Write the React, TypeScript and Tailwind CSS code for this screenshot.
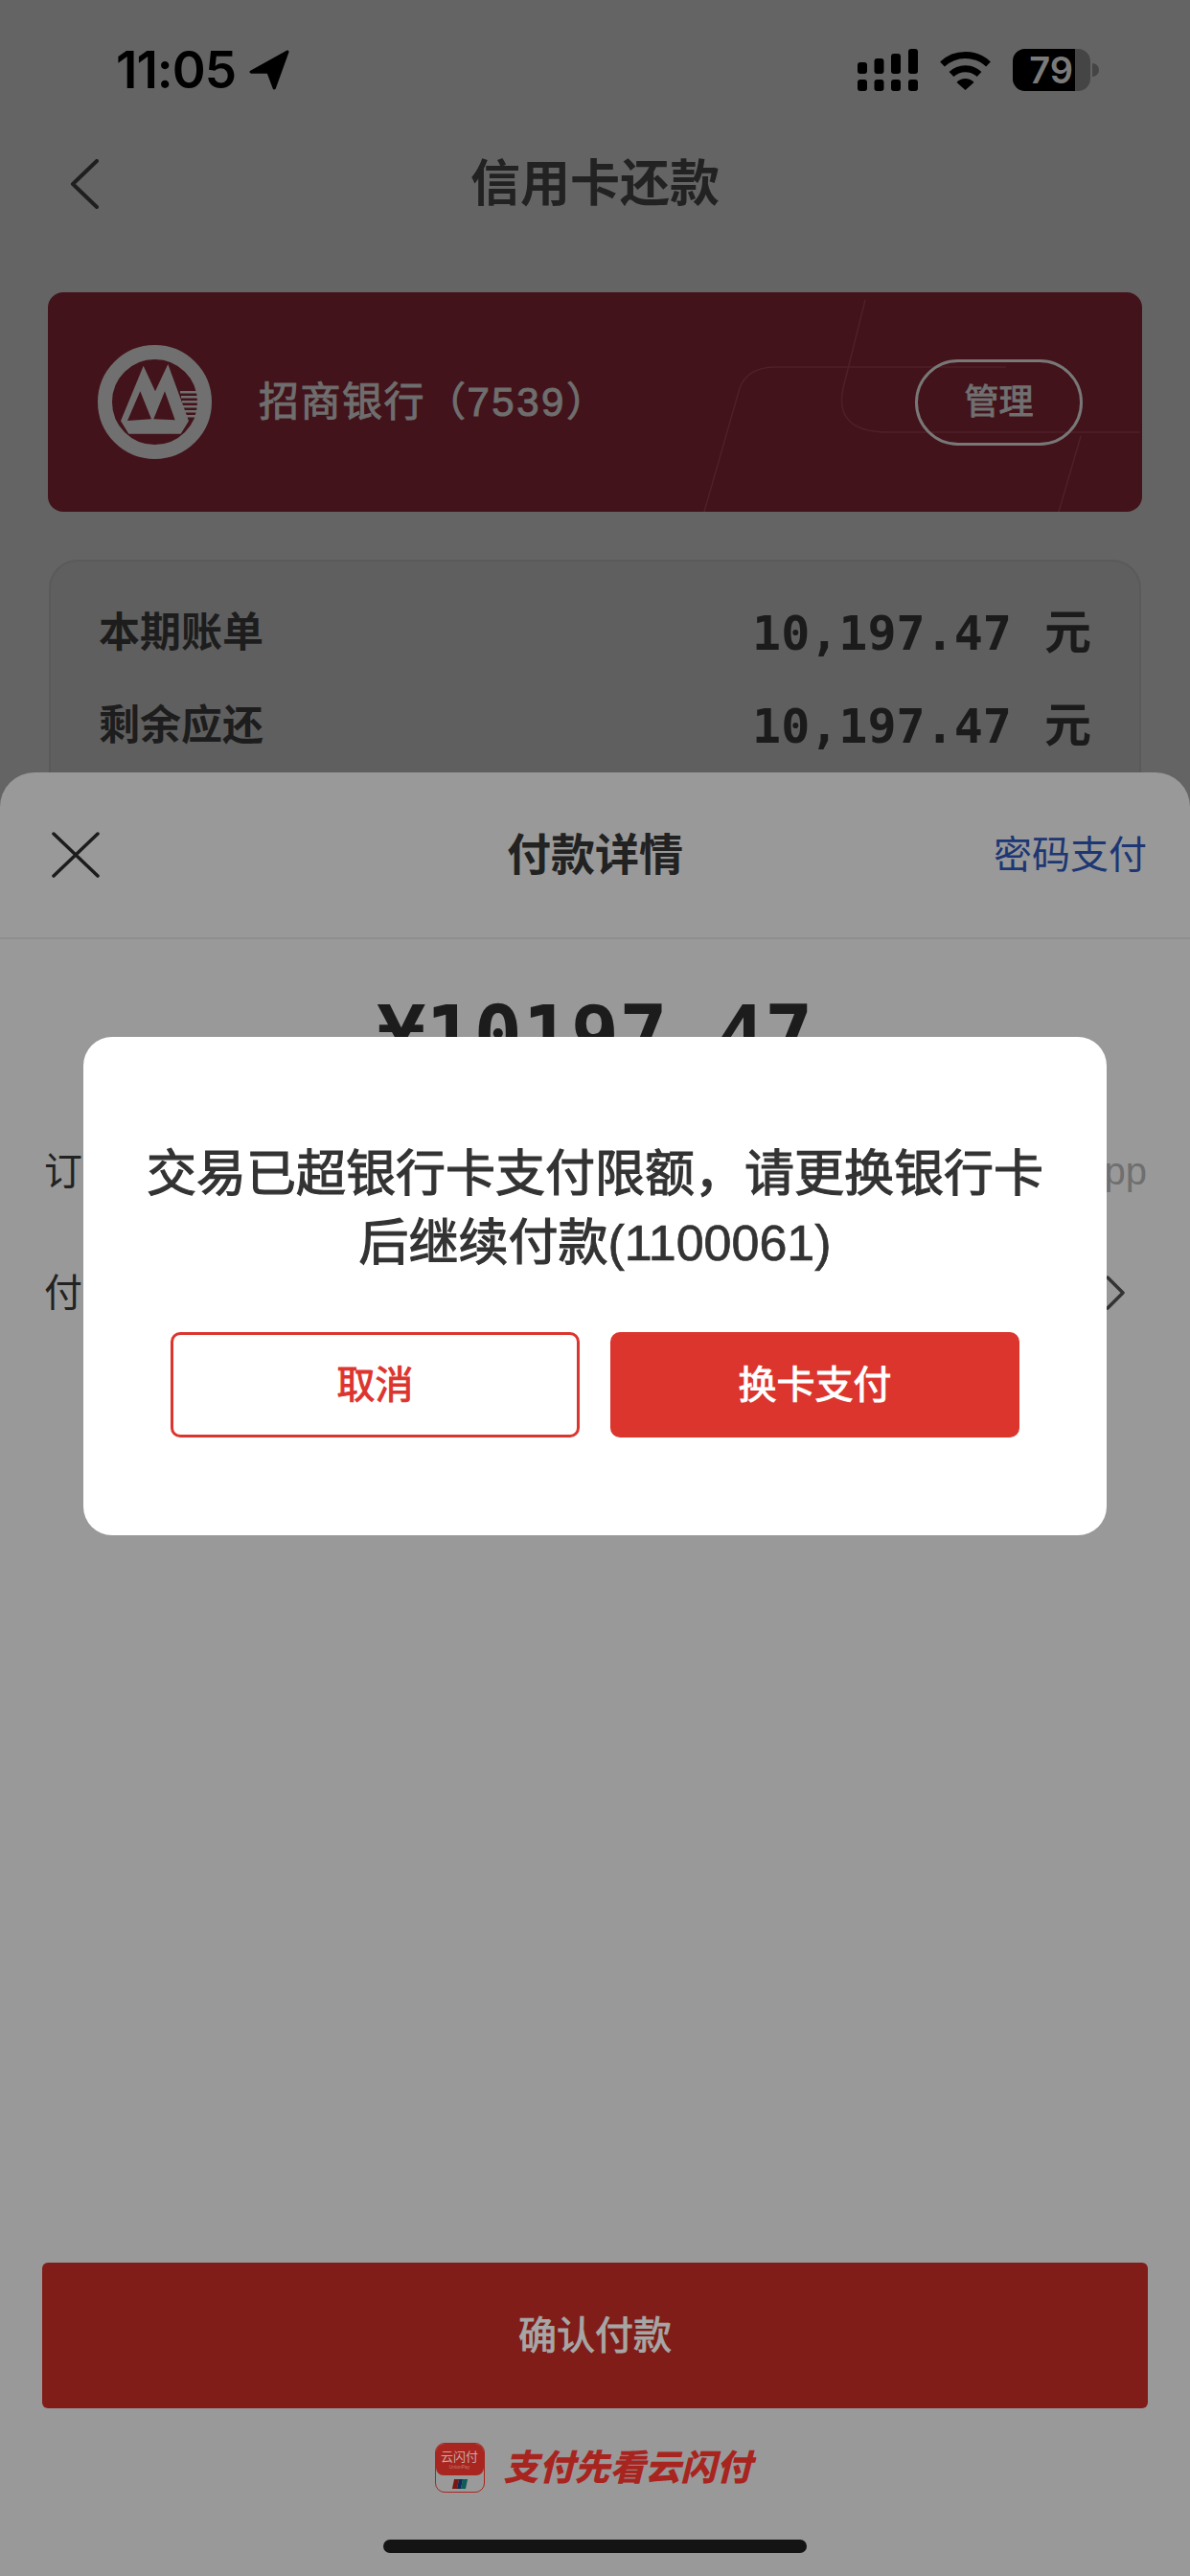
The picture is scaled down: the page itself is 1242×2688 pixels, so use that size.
import React from 'react';

function SignalIcon() {
    return (
        <svg width="63" height="44" viewBox="0 0 63 44" fill="#000">
            <rect x="0" y="14" width="10" height="12" rx="3" />
            <rect x="17.5" y="10" width="10" height="16" rx="3" />
            <rect x="35" y="5" width="10" height="21" rx="3" />
            <rect x="53" y="0" width="10" height="26" rx="3" />
            <rect x="0" y="32" width="10" height="12" rx="3" />
            <rect x="17.5" y="32" width="10" height="12" rx="3" />
            <rect x="35" y="32" width="10" height="12" rx="3" />
            <rect x="53" y="32" width="10" height="12" rx="3" />
        </svg>
    );
}

function WifiIcon() {
    return (
        <svg width="55" height="41" viewBox="0 0 55 41" fill="none" stroke="#000" strokeWidth="7">
            <path d="M3.5 14 A 35 35 0 0 1 51.5 14" />
            <path d="M13 24.5 A 21 21 0 0 1 42 24.5" />
            <path d="M18.5 33 A 12 12 0 0 1 36.5 33 L27.5 41 Z" fill="#000" stroke="none" />
        </svg>
    );
}

function BankLogo() {
    return (
        <svg width="119" height="119" viewBox="0 0 119 119" className="shrink-0">
            <circle cx="59.5" cy="59.5" r="52" fill="none" stroke="#707070" strokeWidth="15" />
            <path
                fillRule="evenodd"
                fill="#707070"
                d="M24 79.3 L47.7 21.7 L60 48.3 L73.3 20 L95 79.3 L86.7 92.7 L32.3 92.7 Z M31 79 L56 77.3 L44.3 48.3 Z M58.3 77.3 L80.7 78.3 L70 48.3 Z"
            />
            <g fill="#707070">
                <rect x="86" y="48" width="19" height="2.5" />
                <rect x="87" y="53" width="18" height="2.5" />
                <rect x="88" y="58" width="17" height="2.5" />
                <rect x="89" y="63" width="16" height="2.5" />
                <rect x="90" y="68" width="15" height="2.5" />
                <rect x="91" y="73" width="13" height="2.5" />
            </g>
        </svg>
    );
}

function AmountRow({ label, amount }: { label: string; amount: string }) {
    return (
        <div className="flex h-[97px] items-center justify-between">
            <span className="text-[43px] font-semibold leading-none text-[#1d1d1d]">{label}</span>
            <span className="flex items-center text-[#1b1b1b]">
                <span className="[font-family:'DejaVu_Sans_Mono',monospace] text-[50px] font-bold leading-none">{amount}</span>
                <span className="ml-[34px] text-[49px] font-semibold leading-none">元</span>
            </span>
        </div>
    );
}

export default function App() {
    return (
        <div className="relative flex h-[2688px] w-[1242px] flex-col overflow-hidden bg-[#646464] [font-family:'Liberation_Sans','Noto_Sans_CJK_SC',sans-serif]">
            <div className="h-[806px] shrink-0 overflow-hidden">
                {/* status bar */}
                <div className="flex h-[130px] items-start justify-between pl-[121px] pr-[95px] pt-[51px]">
                    <div className="flex items-center">
                        <span className="[font-family:Inter,sans-serif] text-[53px] font-semibold leading-[44px] tracking-[-1px] text-black">11:05</span>
                        <svg width="42" height="42" viewBox="0 0 40 40" className="ml-[14px]" fill="#000" stroke="#000" strokeWidth="3" strokeLinejoin="round">
                            <path d="M38 2 L2 22 L19 22 L25 38 Z" />
                        </svg>
                    </div>
                    <div className="flex items-center">
                        <SignalIcon />
                        <div className="ml-[22px]">
                            <WifiIcon />
                        </div>
                        <div className="relative ml-[22px] flex h-[44px] w-[81px] overflow-hidden rounded-[13px] bg-[#454545]">
                            <div className="flex w-[65px] items-center justify-end bg-black pr-[2px]">
                                <span className="[font-family:Inter,sans-serif] text-[38px] font-semibold leading-none text-[#7a7a7a]">79</span>
                            </div>
                        </div>
                        <div className="ml-[2px] h-[14px] w-[7px] rounded-r-full bg-[#454545]" />
                    </div>
                </div>

                {/* nav */}
                <div className="grid h-[124px] grid-cols-[1fr_auto_1fr] items-center px-[73px]">
                    <svg width="30" height="52" viewBox="0 0 30 52" fill="none" stroke="#1f1f1f" strokeWidth="4" strokeLinecap="round" strokeLinejoin="round">
                        <path d="M28 2 L3 26 L28 50" />
                    </svg>
                    <h1 className="text-[52px] font-semibold leading-none text-[#222]">信用卡还款</h1>
                    <div />
                </div>

                {/* bank card */}
                <div className="relative mx-[50px] mt-[51px] flex h-[229px] items-center overflow-hidden rounded-[16px] bg-[#42131a] pl-[52px] pr-[62px]">
                    <svg className="absolute inset-0" width="1140" height="229" viewBox="0 0 1140 229" fill="none" stroke="#4f2127" strokeWidth="1.5">
                        <path d="M853 8 L830 100 Q820 145 875 146 L1140 146" />
                        <path d="M685 229 L722 100 Q730 78 760 78 L1000 78" />
                        <path d="M1055 229 L1078 150" />
                    </svg>
                    <BankLogo />
                    <span className="relative ml-[49px] text-[42px] leading-none tracking-[1.5px] text-[#6e6e6e] [-webkit-text-stroke:1px_#6e6e6e]">
                        招商银行（<span className="tracking-[2.5px]">7539</span>）
                    </span>
                    <div className="relative ml-auto flex h-[90px] w-[175px] items-center justify-center rounded-full border-[3px] border-[#787878]">
                        <span className="text-[36px] leading-none text-[#707070] [-webkit-text-stroke:1px_#707070]">管理</span>
                    </div>
                </div>

                {/* bill summary */}
                <div className="mx-[51px] mt-[50px] h-[300px] rounded-[30px] border-[2px] border-[#5a5a5a] bg-[#5f5f5f] pl-[50px] pr-[50px] pt-[26px]">
                    <AmountRow label="本期账单" amount="10,197.47" />
                    <AmountRow label="剩余应还" amount="10,197.47" />
                </div>
            </div>

            {/* payment sheet */}
            <div className="flex flex-1 flex-col rounded-t-[36px] bg-[#999999]">
                <div className="grid h-[174px] shrink-0 grid-cols-[1fr_auto_1fr] items-center border-b-[2px] border-[#8e8e8e] px-[45px]">
                    <svg width="50" height="48" viewBox="0 0 50 48" fill="none" stroke="#1c1c1c" strokeWidth="3.5" strokeLinecap="round" className="ml-[9px]">
                        <path d="M2 2 L48 46 M48 2 L2 46" />
                    </svg>
                    <h2 className="text-[46px] font-semibold leading-none text-[#222]">付款详情</h2>
                    <span className="justify-self-end text-[40px] leading-none text-[#1d3674]">密码支付</span>
                </div>

                <div className="mt-[50px] text-center [font-family:'DejaVu_Sans_Mono',monospace] text-[84px] font-bold leading-[100px] text-[#1c1c1c]">
                    ¥10197.47
                </div>

                <div className="mt-[28px] flex h-[127px] items-center justify-between pl-[46px] pr-[45px]">
                    <span className="text-[40px] leading-none text-[#222]">订单信息</span>
                    <span className="text-[40px] leading-none text-[#6f6f6f]">信用卡还款app</span>
                </div>
                <div className="flex h-[127px] items-center justify-between pl-[46px] pr-[68px]">
                    <span className="text-[40px] leading-none text-[#222]">付款方式</span>
                    <svg width="20" height="36" viewBox="0 0 20 36" fill="none" stroke="#333" strokeWidth="3.5" strokeLinecap="round" strokeLinejoin="round">
                        <path d="M2 2 L18 18 L2 34" />
                    </svg>
                </div>

                <div className="mx-[44px] mt-auto flex h-[152px] shrink-0 items-center justify-center rounded-[6px] bg-[#811d18]">
                    <span className="text-[40px] leading-none text-[#a6a6a6] [-webkit-text-stroke:1px_#a6a6a6]">确认付款</span>
                </div>

                {/* unionpay slogan */}
                <div className="mt-[36px] flex h-[52px] shrink-0 items-center justify-center pr-[4px]">
                    <div className="flex h-[52px] w-[52px] flex-col overflow-hidden rounded-[10px] border border-[#a8261f] bg-[#9a9a9a]">
                        <div className="flex h-[33px] flex-col items-center justify-center rounded-b-[8px] bg-[#a8261f]">
                            <span className="text-[13px] leading-[14px] text-[#c9a9a5]">云闪付</span>
                            <span className="text-[5px] leading-[6px] text-[#c47a73]">UnionPay</span>
                        </div>
                        <div className="flex flex-1 items-center justify-center">
                            <div className="flex h-[10px] w-[14px] -skew-x-12">
                                <div className="flex-1 bg-[#7a1512]" />
                                <div className="flex-1 bg-[#102a55]" />
                                <div className="flex-1 bg-[#0d5c5a]" />
                            </div>
                        </div>
                    </div>
                    <span className="ml-[20px] text-[37px] font-black italic leading-none text-[#a8241f]">支付先看云闪付</span>
                </div>

                <div className="mx-[400px] mb-[24px] mt-[49px] h-[14px] shrink-0 rounded-full bg-[#141414]" />
            </div>

            {/* alert dialog */}
            <div className="absolute left-[87px] top-[1082px] flex h-[520px] w-[1068px] flex-col items-center rounded-[30px] bg-white pt-[107px]">
                <p className="text-center text-[52px] leading-[72px] text-[#333] [-webkit-text-stroke:1.2px_#333]">
                    交易已超银行卡支付限额，请更换银行卡
                    <br />
                    后继续付款<span className="[-webkit-text-stroke:0.7px_#333]">(1100061)</span>
                </p>
                <div className="mt-[57px] flex gap-[32px]">
                    <button className="flex h-[110px] w-[427px] items-center justify-center rounded-[10px] border-[3px] border-[#dc352e] text-[40px] text-[#dc352e] [-webkit-text-stroke:1px_#dc352e]">
                        取消
                    </button>
                    <button className="flex h-[110px] w-[427px] items-center justify-center rounded-[10px] bg-[#dc352e] text-[40px] text-white [-webkit-text-stroke:1px_#fff]">
                        换卡支付
                    </button>
                </div>
            </div>
        </div>
    );
}
